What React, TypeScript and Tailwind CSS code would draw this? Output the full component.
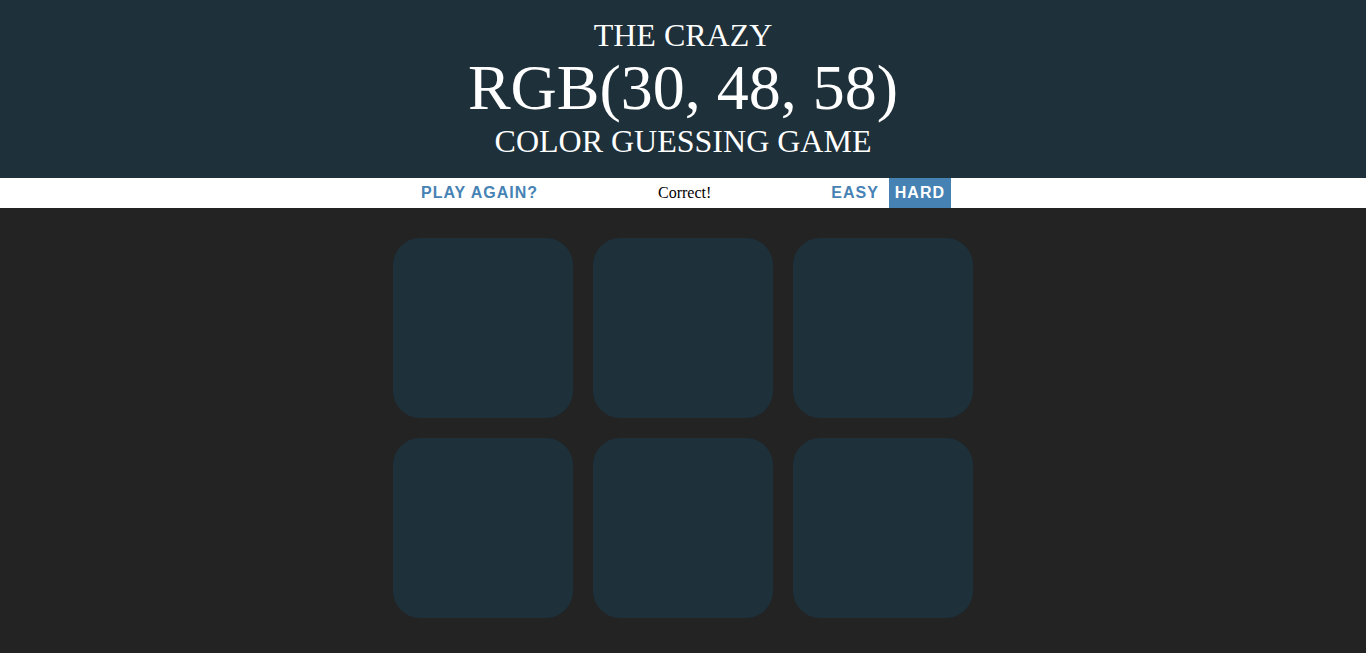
const squares = [0, 1, 2, 3, 4, 5];

export default function App() {
  return (
    <div className="min-h-screen bg-[#232323] font-['Liberation_Serif',serif]">
      {/* Header */}
      <h1 className="bg-[#1e303a] pt-[18px] pb-[19px] text-center font-normal uppercase leading-[1.1] text-white text-[32px]">
        The Crazy
        <br />
        <span className="text-[64px]">RGB(30, 48, 58)</span>
        <br />
        Color Guessing Game
      </h1>

      {/* Stripe */}
      <div className="flex h-[30px] items-stretch justify-center bg-white">
        <button className="px-[6px] font-['Liberation_Sans',Arial,sans-serif] text-[16px] font-bold uppercase tracking-[1px] text-[#4682b4]">
          Play again?
        </button>
        <span className="mx-[4px] flex w-[20%] items-center justify-center text-[16px] text-black">
          Correct!
        </span>
        <button className="px-[6px] font-['Liberation_Sans',Arial,sans-serif] text-[16px] font-bold uppercase tracking-[1px] text-[#4682b4]">
          Easy
        </button>
        <button className="ml-[4px] bg-[#4682b4] px-[6px] font-['Liberation_Sans',Arial,sans-serif] text-[16px] font-bold uppercase tracking-[1px] text-white">
          Hard
        </button>
      </div>

      {/* Squares */}
      <div className="mx-auto mt-[20px] flex w-[600px] flex-wrap">
        {squares.map((i) => (
          <div key={i} className="m-[10px] h-[180px] w-[180px] rounded-[27px] bg-[#1e303a]" />
        ))}
      </div>
    </div>
  );
}
